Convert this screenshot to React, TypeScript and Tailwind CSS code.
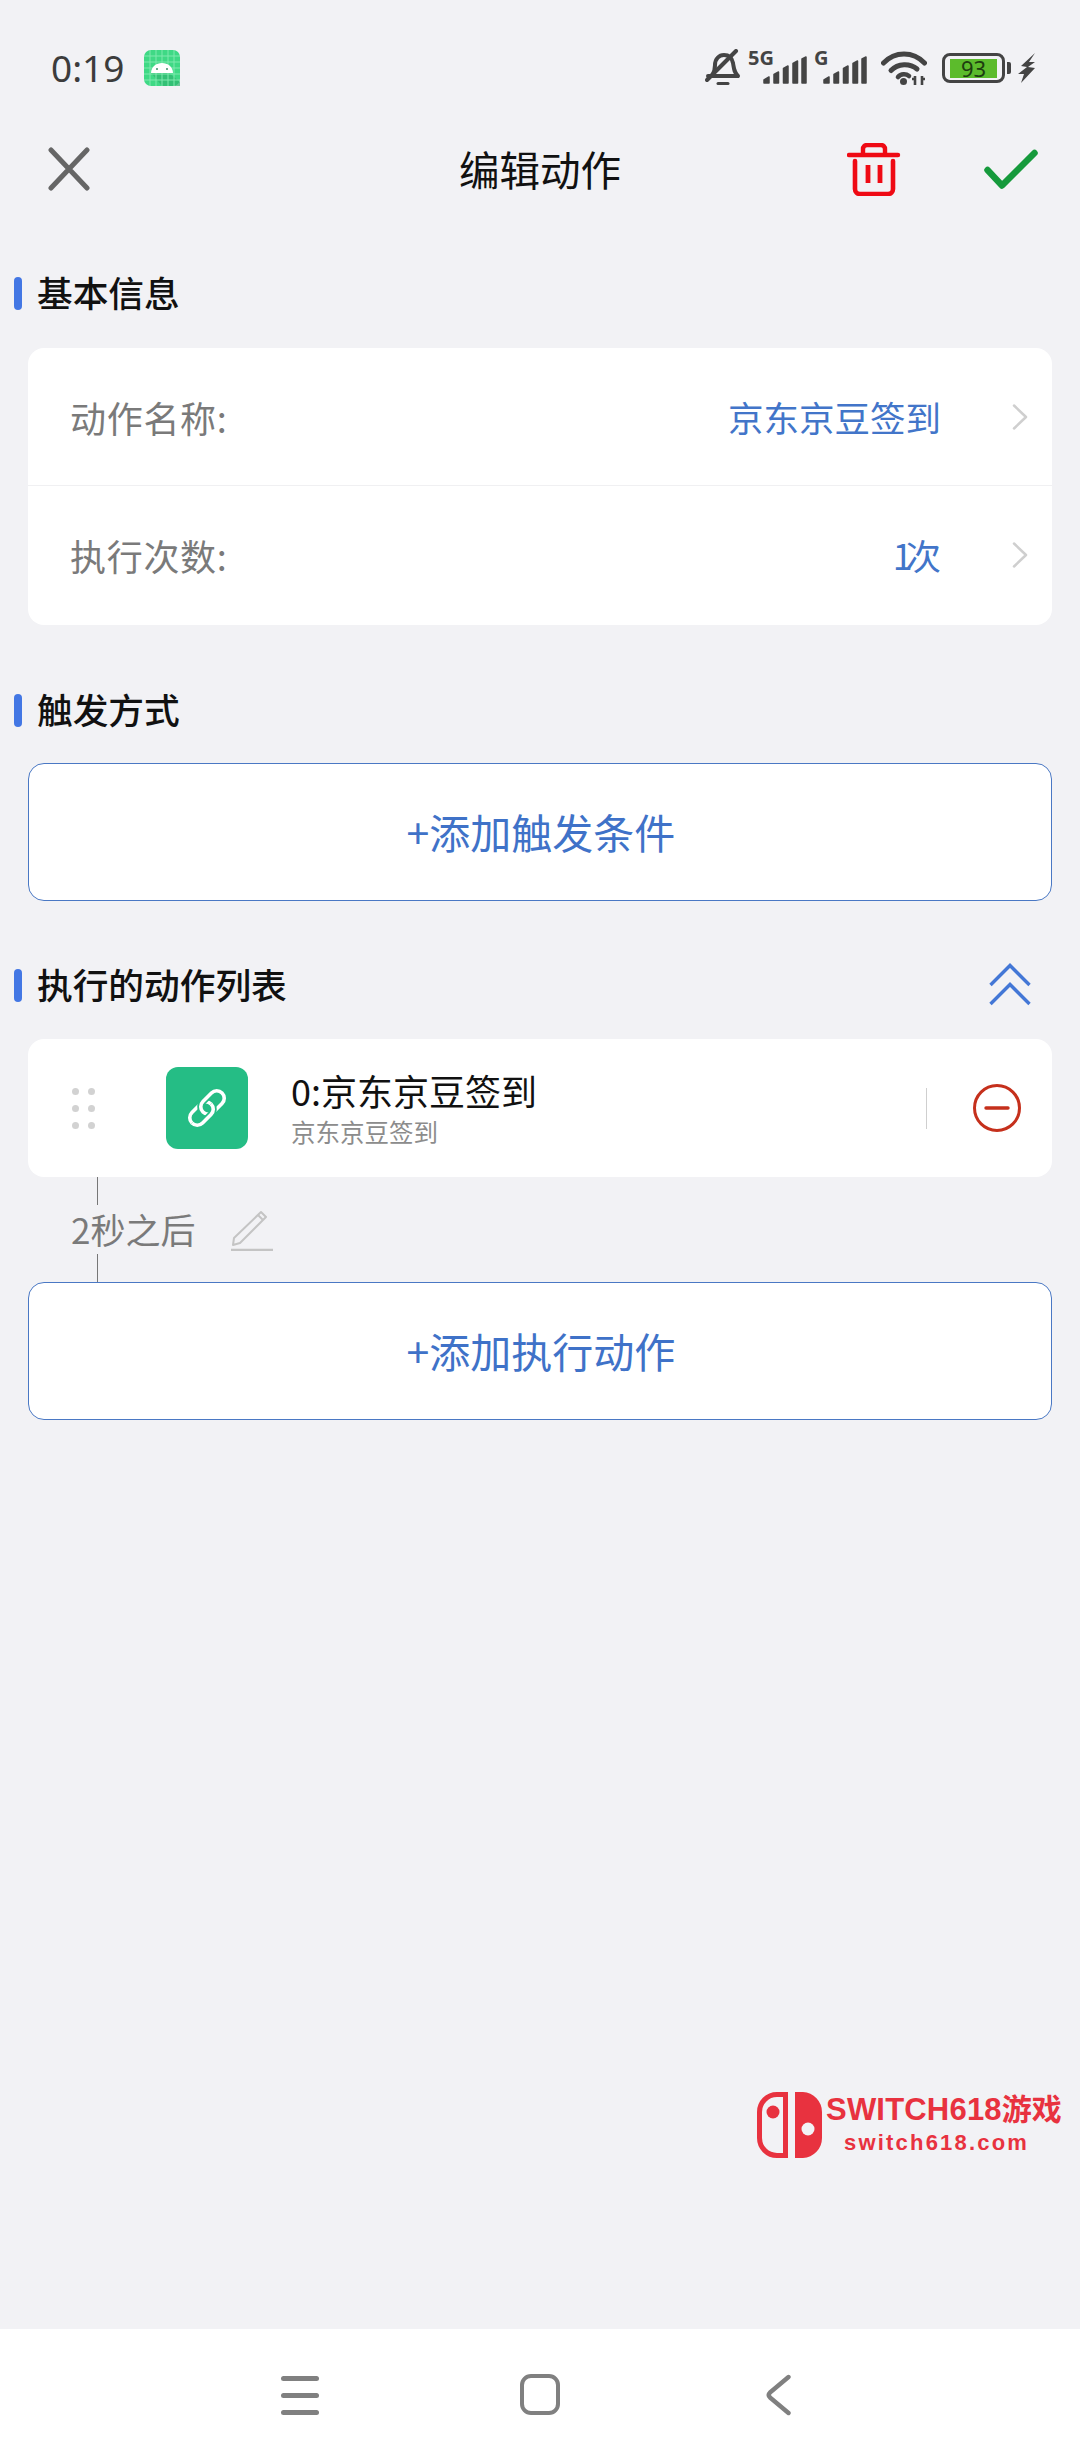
const cjk = { fontFamily: '"Noto Sans CJK SC", "Noto Sans", sans-serif' };

function SectionTitle({ children, right }: { children: React.ReactNode; right?: React.ReactNode }) {
  return (
    <div className="flex h-[60px] items-center pl-[14px]">
      <div className="h-[33px] w-[8px] rounded-full bg-[#4377e4]" />
      <div className="ml-[15px] pb-[3px] text-[35.7px] leading-none font-medium text-[#111]">{children}</div>
      {right}
    </div>
  );
}

function InfoRow({ label, value, border }: { label: string; value: React.ReactNode; border?: boolean }) {
  return (
    <div className={`flex h-[138px] items-center pl-[42px] pr-[24px] ${border ? "border-b border-[#f0f0f2]" : ""}`}>
      <div className="flex-1 text-[36px] leading-none tracking-[0.7px] text-[#7a7a7a]">{label}</div>
      <div className="text-[35.5px] leading-none text-[#4275c9]">{value}</div>
      <svg className="ml-[71px]" width="16" height="26" viewBox="0 0 16 26" fill="none">
        <path d="M2 1.5 14 13 2 24.5" stroke="#cfcfcf" strokeWidth="2.5" strokeLinecap="round" strokeLinejoin="round" />
      </svg>
    </div>
  );
}

function AddButton({ label }: { label: string }) {
  return (
    <div className="mx-[28px] flex h-[138px] items-center justify-center rounded-[16px] border border-[#4a78c4] bg-white pb-[2px] pl-[2px] text-[41px] leading-none text-[#3f72c8]">
      {label}
    </div>
  );
}

function Bars({ className }: { className?: string }) {
  return (
    <svg className={className} width="44" height="28" viewBox="0 0 44 28" fill="#444" stroke="#444" strokeWidth="1.5" strokeLinejoin="round">
      <path d="M1 27V24L6 21V27Z" />
      <path d="M11 27V18.500L15.500 16V27Z" />
      <path d="M20.500 27V12.500L25 10V27Z" />
      <path d="M30 27V7.500L34.500 5V27Z" />
      <path d="M39 27V3L43 1V27Z" />
    </svg>
  );
}

function AndroidIcon() {
  return (
    <svg width="36" height="36" viewBox="0 0 36 36" className="ml-[20px]">
      <rect width="36" height="36" rx="7" fill="#3fd985" />
      <path d="M7 23 25 23 36 32V36H18Z" fill="#2fb56d" opacity="0.7" />
      <g stroke="#7fe9ae" strokeWidth="1">
        <path d="M6 0V36M12 0V36M18 0V36M24 0V36M30 0V36M0 6H36M0 12H36M0 18H36M0 24H36M0 30H36" />
      </g>
      <path d="M7 23C7 17 12 13 18 13S29 17 29 23Z" fill="#fff" />
      <circle cx="13" cy="19" r="1" fill="#3a8f66" />
      <circle cx="23" cy="19" r="1" fill="#3a8f66" />
    </svg>
  );
}

function StatusBar() {
  return (
    <div className="mt-[36px] flex h-[64px] items-center pl-[51px]">
      <div className="pb-[2px] text-[37px] leading-none text-[#3c3c3c]" style={{ fontFamily: '"Noto Sans", sans-serif' }}>0:19</div>
      <AndroidIcon />
      <div className="flex-1" />
      <svg width="36" height="38" viewBox="0 0 36 38" fill="none">
        <path d="M7 27c2-3 3-5 3-11 0-6 4-10 9-10s8 3 9 8c1 6 1 9 5 13H3" stroke="#444" strokeWidth="4" strokeLinejoin="round" strokeLinecap="round" />
        <path d="M2 31 31 2" stroke="#444" strokeWidth="4" strokeLinecap="round" />
        <path d="M13 34.500h10" stroke="#444" strokeWidth="3" strokeLinecap="round" />
      </svg>
      <div className="relative ml-[7px] h-[32px] w-[60px]">
        <span className="absolute left-0 top-[-4px] text-[20px] font-bold leading-none text-[#444]" style={{ fontFamily: '"Open Sans", sans-serif' }}>5G</span>
        <Bars className="absolute left-[15px] top-[4px]" />
      </div>
      <div className="relative ml-[6px] h-[32px] w-[54px]">
        <span className="absolute left-0 top-[-4px] text-[20px] font-bold leading-none text-[#444]" style={{ fontFamily: '"Open Sans", sans-serif' }}>G</span>
        <Bars className="absolute left-[9px] top-[4px]" />
      </div>
      <svg className="ml-[13px]" width="46" height="34" viewBox="0 0 46 34" fill="none">
        <path d="M2.500 12C14 0 32 0 43.500 12" stroke="#444" strokeWidth="5" strokeLinecap="round" />
        <path d="M10 19.500C17 12 29 12 36 18" stroke="#444" strokeWidth="5" strokeLinecap="round" />
        <path d="M17 26C20 22.500 25 22.500 28 25" stroke="#444" strokeWidth="4.6" strokeLinecap="round" />
        <circle cx="22.500" cy="30.500" r="3.500" fill="#444" />
        <path d="M34 25v9M31 28h3M41 25v9M41 28h3" stroke="#444" strokeWidth="2.600" />
      </svg>
      <div className="ml-[15px] flex items-center">
        <div className="flex h-[30px] w-[63px] items-center justify-center rounded-[8px] border-[3px] border-[#444] p-[2px]">
          <div className="flex h-[19px] w-[47px] items-center justify-center bg-[#5cbb2c] text-[22px] leading-none text-[#1e3d10]" style={{ fontFamily: '"Noto Sans", sans-serif' }}>93</div>
        </div>
        <div className="ml-[2px] h-[12px] w-[4px] rounded-r-[2px] bg-[#444]" />
      </div>
      <svg className="ml-[7px] mr-[44px]" width="18" height="30" viewBox="0 0 18 30" fill="#444">
        <path d="M17 0 3 13 9 14 0 21 6 21 3 30 17 15 10 14 17 9 11 9Z" />
      </svg>
    </div>
  );
}

function Header() {
  return (
    <div className="relative flex h-[140px] items-center justify-center">
      <div className="pb-[2px] text-[40.5px] leading-none text-[#111]">编辑动作</div>
      <svg className="absolute left-[48px] top-[47px]" width="42" height="44" viewBox="0 0 42 44" fill="none">
        <path d="M3 3 39 41M39 3 3 41" stroke="#666" strokeWidth="5" strokeLinecap="round" />
      </svg>
      <svg className="absolute left-[847px] top-[43px]" width="54" height="53" viewBox="0 0 54 53" fill="none" stroke="#ef0a14" strokeLinecap="round" strokeLinejoin="round">
        <path d="M2 12H51" strokeWidth="4.4" />
        <path d="M16 11V6a4 4 0 0 1 4-4h14a4 4 0 0 1 4 4v5" strokeWidth="4.4" />
        <path d="M8 18V46a5 5 0 0 0 5 5H41a5 5 0 0 0 5-5V18" strokeWidth="4.6" />
        <path d="M21 22V40M33 22V40" strokeWidth="4.8" strokeLinecap="butt" />
      </svg>
      <svg className="absolute left-[984px] top-[49px]" width="54" height="41" viewBox="0 0 54 41" fill="none">
        <path d="M3.5 21 18 36.5 50.5 4" stroke="#169a3c" strokeWidth="6.5" strokeLinecap="round" strokeLinejoin="round" />
      </svg>
    </div>
  );
}

function ChainIcon() {
  const lower = <rect x="3" y="20" width="27" height="15" rx="7.5" transform="rotate(-45 16.500 27.500)" />;
  const upper = <rect x="14" y="9" width="27" height="15" rx="7.5" transform="rotate(-45 27.500 16.500)" />;
  return (
    <svg width="44" height="44" viewBox="0 0 44 44" fill="none">
      <defs>
        <clipPath id="chain-front">
          <path d="M44 0V44H0Z" />
        </clipPath>
      </defs>
      <g stroke="#fff" strokeWidth="3.6">{lower}</g>
      <g stroke="#25bd85" strokeWidth="7">{upper}</g>
      <g stroke="#fff" strokeWidth="3.6">{upper}</g>
      <g clipPath="url(#chain-front)">
        <g stroke="#25bd85" strokeWidth="7">{lower}</g>
        <g stroke="#fff" strokeWidth="3.6">{lower}</g>
      </g>
    </svg>
  );
}

function ActionCard() {
  return (
    <div className="mx-[28px] flex h-[138px] items-center rounded-[16px] bg-white">
      <div className="ml-[44px] grid w-[23px] grid-cols-2 gap-x-[9px] gap-y-[10px]">
        {[0, 1, 2, 3, 4, 5].map((i) => (
          <div key={i} className="h-[7px] w-[7px] rounded-full bg-[#d2d2d2]" />
        ))}
      </div>
      <div className="ml-[71px] flex h-[82px] w-[82px] items-center justify-center rounded-[12px] bg-[#25bd85]">
        <ChainIcon />
      </div>
      <div className="ml-[43px] flex-1">
        <div className="text-[36px] leading-none text-[#111]">0:京东京豆签到</div>
        <div className="mt-[12px] text-[24.5px] leading-none text-[#8c8c8c]">京东京豆签到</div>
      </div>
      <div className="h-[41px] w-px bg-[#cfcfcf]" />
      <svg className="ml-[46px] mr-[31px]" width="48" height="48" viewBox="0 0 48 48" fill="none">
        <circle cx="24" cy="24" r="22.5" stroke="#c5301c" strokeWidth="3" />
        <path d="M13 24H35" stroke="#c5301c" strokeWidth="3.4" strokeLinecap="round" />
      </svg>
    </div>
  );
}

function Watermark() {
  return (
    <div className="absolute left-[757px] top-[2092px] h-[66px] w-[310px]">
      <svg className="absolute left-0 top-0" width="66" height="66" viewBox="0 0 66 66">
        <path d="M28.500 2.500H20A17.500 17.500 0 0 0 2.500 20V46A17.500 17.500 0 0 0 20 63.500H28.500Z" fill="none" stroke="#e8323f" strokeWidth="5" />
        <circle cx="16" cy="20" r="6.500" fill="#e8323f" />
        <path d="M38 0H46A20 20 0 0 1 65 20V46A20 20 0 0 1 46 66H38Z" fill="#e8323f" />
        <circle cx="51" cy="37" r="6.500" fill="#f2f2f5" />
      </svg>
      <div className="absolute left-[69px] top-[1px] whitespace-nowrap text-[31px] font-bold leading-[34px] tracking-[0.2px] text-[#e8323f]" style={{ fontFamily: '"Liberation Sans", "Noto Sans CJK SC", sans-serif' }}>SWITCH618<span className="text-[30px] tracking-normal">游戏</span></div>
      <div className="absolute left-[87px] top-[38px] whitespace-nowrap text-[22px] font-bold leading-[26px] tracking-[2.2px] text-[#e8323f]" style={{ fontFamily: '"Liberation Sans", sans-serif' }}>switch618.com</div>
    </div>
  );
}

function NavBar() {
  return (
    <div className="mt-auto flex h-[131px] items-start bg-white">
      <div className="ml-[281px] mt-[47px] flex w-[38px] flex-col gap-[12px]">
        <div className="h-[5px] rounded-full bg-[#808080]" />
        <div className="h-[5px] rounded-full bg-[#808080]" />
        <div className="h-[5px] rounded-full bg-[#808080]" />
      </div>
      <div className="ml-[201px] mt-[45px] h-[41px] w-[40px] rounded-[11px] border-[4px] border-[#808080]" />
      <svg className="ml-[205px] mt-[45px]" width="26" height="42" viewBox="0 0 26 42" fill="none">
        <path d="M23.500 3 5 18.500Q2.500 21 5 23.500L23.500 39" stroke="#808080" strokeWidth="4.4" strokeLinecap="round" strokeLinejoin="round" />
      </svg>
    </div>
  );
}

export default function App() {
  return (
    <div className="relative flex h-[2460px] w-[1080px] flex-col overflow-hidden bg-[#f2f2f5]" style={cjk}>
      <StatusBar />
      <Header />
      <div className="mt-[23px]">
        <SectionTitle>基本信息</SectionTitle>
      </div>
      <div className="mx-[28px] mt-[25px] h-[277px] overflow-hidden rounded-[16px] bg-white">
        <InfoRow label="动作名称:" value="京东京豆签到" border />
        <InfoRow label="执行次数:" value={<><span className="tracking-[-7px]">1</span>次</>} />
      </div>
      <div className="mt-[55px] mb-[23px]">
        <SectionTitle>触发方式</SectionTitle>
      </div>
      <AddButton label="+添加触发条件" />
      <div className="mt-[54px] mb-[24px]">
        <SectionTitle
          right={
            <svg className="ml-auto mr-[49px]" width="42" height="44" viewBox="0 0 42 44" fill="none">
              <path d="M1.500 22 21 2.500 40.500 22M1.500 41 21 21.500 40.500 41" stroke="#4377d6" strokeWidth="3.4" />
            </svg>
          }
        >
          执行的动作列表
        </SectionTitle>
      </div>
      <ActionCard />
      <div className="ml-[97px] h-[28px] w-px bg-[#777]" />
      <div className="ml-[71px] flex h-[49px] items-center">
        <div className="pb-[2px] text-[35px] leading-none text-[#7a7a7a]">2秒之后</div>
        <svg className="ml-[36px]" width="42" height="42" viewBox="0 0 42 42" fill="none" stroke="#c4c4c4" strokeWidth="2">
          <path d="M3 29 30 3l5 5L9 34l-7 2Z" strokeLinejoin="round" />
          <path d="M27 6l5 5" />
          <path d="M0 41H42" strokeWidth="2.400" />
        </svg>
      </div>
      <div className="ml-[97px] h-[28px] w-px bg-[#777]" />
      <AddButton label="+添加执行动作" />
      <Watermark />
      <NavBar />
    </div>
  );
}
